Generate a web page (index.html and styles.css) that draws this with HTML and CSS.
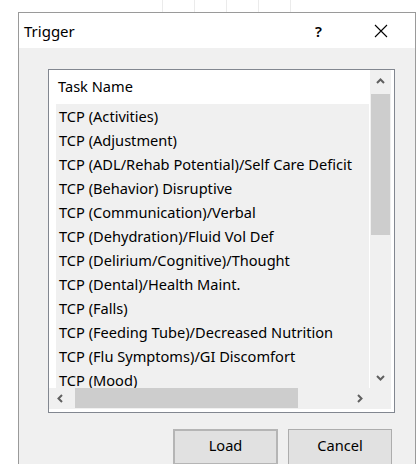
FILE: index.html
```html
<!DOCTYPE html>
<html lang="en">
<head>
<meta charset="utf-8">
<title>Trigger</title>
<link rel="stylesheet" href="styles.css">
</head>
<body>
<div class="backdrop">
  <div class="dialog">
    <div class="titlebar">
      <span class="title">Trigger</span>
      <span class="help">?</span>
      <span class="close">
        <svg width="14" height="14" viewBox="0 0 14 14"><path d="M1 1L13 13M13 1L1 13" stroke="#000" stroke-width="1.1" fill="none"/></svg>
      </span>
    </div>
    <div class="client">
      <div class="listbox">
        <div class="list-main">
          <div class="list-header">Task Name</div>
          <div class="rows">
            <div class="row">TCP (Activities)</div>
            <div class="row">TCP (Adjustment)</div>
            <div class="row">TCP (ADL/Rehab Potential)/Self Care Deficit</div>
            <div class="row">TCP (Behavior) Disruptive</div>
            <div class="row">TCP (Communication)/Verbal</div>
            <div class="row">TCP (Dehydration)/Fluid Vol Def</div>
            <div class="row">TCP (Delirium/Cognitive)/Thought</div>
            <div class="row">TCP (Dental)/Health Maint.</div>
            <div class="row">TCP (Falls)</div>
            <div class="row">TCP (Feeding Tube)/Decreased Nutrition</div>
            <div class="row">TCP (Flu Symptoms)/GI Discomfort</div>
            <div class="row">TCP (Mood)</div>
          </div>
        </div>
        <div class="vscroll">
          <div class="sb-btn">
            <svg width="9" height="6" viewBox="0 0 9 6"><path d="M1 5L4.5 1.5L8 5" stroke="#606060" stroke-width="2" fill="none"/></svg>
          </div>
          <div class="vtrack"><div class="vthumb"></div></div>
          <div class="sb-btn">
            <svg width="9" height="6" viewBox="0 0 9 6"><path d="M1 1L4.5 4.5L8 1" stroke="#606060" stroke-width="2" fill="none"/></svg>
          </div>
        </div>
        <div class="hscroll">
          <div class="sb-btn">
            <svg width="6" height="9" viewBox="0 0 6 9"><path d="M5 1L1.5 4.5L5 8" stroke="#606060" stroke-width="2" fill="none"/></svg>
          </div>
          <div class="htrack"><div class="hthumb"></div></div>
          <div class="sb-btn">
            <svg width="6" height="9" viewBox="0 0 6 9"><path d="M1 1L4.5 4.5L1 8" stroke="#606060" stroke-width="2" fill="none"/></svg>
          </div>
        </div>
        <div class="corner"></div>
      </div>
      <div class="buttons">
        <button class="btn default">Load</button>
        <button class="btn">Cancel</button>
      </div>
    </div>
  </div>
</div>
</body>
</html>
```

FILE: styles.css
```css
html, body {
  margin: 0;
  padding: 0;
  background: #fff;
  overflow: hidden;
}

/* faint grid lines of the window underneath, seen above the dialog */
.backdrop {
  width: 419px;
  height: 464px;
  padding: 12px 0 0 18px;
  box-sizing: border-box;
  font-family: "Noto Sans", "Open Sans", sans-serif;
  color: #000;
  background:
    repeating-linear-gradient(to right, transparent 0 31px, #ebebeb 31px 32px) 131px 0 / 190px 12px no-repeat,
    #fff;
}

.dialog {
  width: 398px;
  height: 470px;
  box-sizing: border-box;
  border: 1px solid #9a9a9a;
  border-bottom: none;
  display: flex;
  flex-direction: column;
}

.titlebar {
  height: 35px;
  flex: none;
  background: #fff;
  display: flex;
  align-items: center;
  padding-left: 5px;
}

.title {
  font-size: 15px;
  flex: 1;
}

.help {
  font-size: 15px;
  font-weight: 600;
  width: 14px;
  margin-right: 45px;
}

.close {
  display: flex;
  width: 14px;
  margin-right: 27px;
}

.client {
  flex: 1;
  background: #f0f0f0;
  padding: 21px 0 0 29px;
}

.listbox {
  width: 347px;
  height: 344px;
  box-sizing: border-box;
  border: 1px solid #828790;
  background: #fff;
  padding: 0 2px 3px 0;
  display: grid;
  grid-template-columns: 321px 21px;
  grid-template-rows: 318px 21px;
}

.list-main {
  overflow: hidden;
  display: flex;
  flex-direction: column;
  padding-right: 1px;
}

.list-header {
  height: 34px;
  flex: none;
  font-size: 14.6px;
  line-height: 33px;
  padding-left: 9px;
  background: #fff;
}

.rows {
  margin-left: 7px;
  background: #f0f0f0;
  flex: 1;
  overflow: hidden;
}

.row {
  height: 24px;
  line-height: 24px;
  font-size: 14.6px;
  padding-left: 3px;
  white-space: nowrap;
}

.vscroll {
  background: #f0f0f0;
  display: flex;
  flex-direction: column;
}

.sb-btn {
  width: 21px;
  height: 21px;
  flex: none;
  display: flex;
  align-items: center;
  justify-content: center;
  background: #f0f0f0;
}

.vtrack {
  flex: 1;
  padding: 3px 1px;
}

.vthumb {
  height: 141px;
  background: #cdcdcd;
}

.hscroll {
  background: #f0f0f0;
  display: flex;
}

.htrack {
  flex: 1;
  padding: 0 2px 0 5px;
  display: flex;
}

.hthumb {
  width: 223px;
  height: 20px;
  background: #cdcdcd;
}

.corner {
  background: #f0f0f0;
}

.buttons {
  display: flex;
  gap: 10px;
  margin: 16px 0 0 125px;
}

.btn {
  font-family: inherit;
  font-size: 14.6px;
  color: #000;
  background: #e1e1e1;
  border: 1px solid #adadad;
  height: 36px;
  width: 104px;
  padding: 0 0 4px;
  margin: 0;
  box-sizing: border-box;
}

.btn.default {
  width: 105px;
  border: 2px solid #b5b5b5;
}
```
